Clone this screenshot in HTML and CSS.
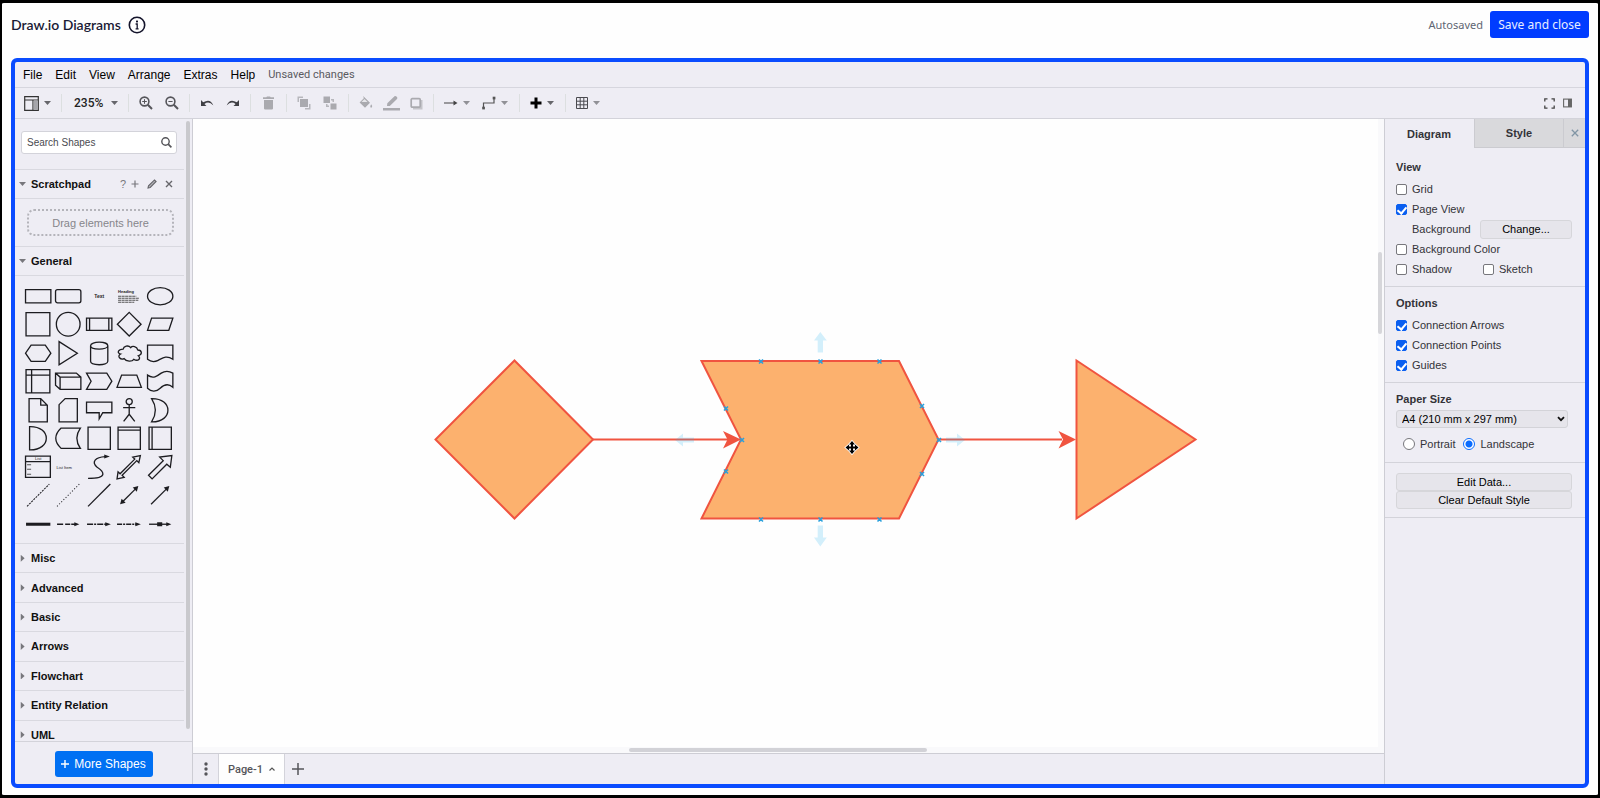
FILE: index.html
```html
<!DOCTYPE html>
<html lang="en">
<head>
<meta charset="utf-8">
<title>Draw.io Diagrams</title>
<link rel="stylesheet" href="styles.css">
</head>
<body>
<div class="page">
  <header class="top">
    <h1 class="title">Draw.io Diagrams</h1>
    <button class="plain" aria-label="Information"><svg width="18" height="18" viewBox="0 0 18 18"><circle cx="9" cy="9" r="7.7" fill="none" stroke="#14142b" stroke-width="1.6"/><rect x="8" y="4.6" width="2" height="1.800" fill="#14142b"/><path d="M7.600 8H9.200V13M7.600 12.800H10.600" fill="none" stroke="#14142b" stroke-width="1.300"/></svg></button>
    <span class="autosaved">Autosaved</span>
    <button class="save">Save and close</button>
  </header>

  <div class="editor">
    <nav class="menubar">
      <button class="menu">File</button><button class="menu">Edit</button><button class="menu">View</button><button class="menu">Arrange</button><button class="menu">Extras</button><button class="menu">Help</button>
      <span class="status">Unsaved changes</span>
    </nav>

    <div class="toolbar">
      <div class="tools tight">
        <button class="plain" aria-label="View"><svg width="15" height="15" viewBox="0 0 15 15"><path d="M.7 .7H14.3V14.3H.7ZM.7 4H14.3M9 4V14.3" fill="none" stroke="#333" stroke-width="1.2"/><rect x="9.5" y="4.5" width="4.3" height="9.3" fill="#a5a5aa"/></svg><i class="caret"></i></button>
      </div>
      <div class="tools">
        <button class="plain zoom">235%<i class="caret"></i></button>
      </div>
      <div class="tools">
        <button class="plain" aria-label="Zoom in"><svg width="14" height="14" viewBox="0 0 14 14" fill="none" stroke="#55555a"><circle cx="5.5" cy="5.5" r="4.4" stroke-width="1.6"/><path d="M8.8 8.8L13 13" stroke-width="2"/><path d="M3.2 5.5H7.8M5.5 3.2V7.8"/></svg></button>
        <button class="plain" aria-label="Zoom out"><svg width="14" height="14" viewBox="0 0 14 14" fill="none" stroke="#55555a"><circle cx="5.5" cy="5.5" r="4.4" stroke-width="1.6"/><path d="M8.8 8.8L13 13" stroke-width="2"/><path d="M3.4 5.5H7.6"/></svg></button>
      </div>
      <div class="tools">
        <button class="plain" aria-label="Undo"><svg width="14" height="14" viewBox="0 0 14 14"><path d="M1 4V10H6.5L4.4 8Q9 4.5 13.3 9.5Q10.5 2 3.2 6.3Z" fill="#3f3f44"/></svg></button>
        <button class="plain" aria-label="Redo"><svg width="14" height="14" viewBox="0 0 14 14"><path d="M13 4V10H7.5L9.6 8Q5 4.5 .7 9.5Q3.5 2 10.8 6.3Z" fill="#3f3f44"/></svg></button>
      </div>
      <div class="tools wide">
        <button class="plain" aria-label="Delete" disabled><svg width="13" height="14" viewBox="0 0 13 14" fill="#aaaaaf"><path d="M1 1.2H4.3L5 .4H8L8.7 1.2H12V3H1Z"/><path d="M2 4H11V12.5Q11 13.6 9.8 13.6H3.2Q2 13.6 2 12.5Z"/></svg></button>
      </div>
      <div class="tools">
        <button class="plain" aria-label="To front" disabled><svg width="14" height="14" viewBox="0 0 14 14"><path d="M.5 .5H6V2H2V6H.5ZM13.5 13.5H8V12H12V8H13.5Z" fill="#b7b7bc"/><rect x="3" y="3" width="8" height="8" fill="#aaaaaf"/></svg></button>
        <button class="plain" aria-label="To back" disabled><svg width="14" height="14" viewBox="0 0 14 14"><rect x=".5" y=".5" width="6.5" height="6.5" fill="#aaaaaf"/><rect x="7.5" y="7.5" width="6" height="6" fill="#aaaaaf"/><path d="M8 3H11V6H9.500V4.500H8ZM3 8H4.500V9.500H6V11H3Z" fill="#b7b7bc"/></svg></button>
      </div>
      <div class="tools close">
        <button class="plain" aria-label="Fill color" disabled><svg width="14" height="14" viewBox="0 0 14 14"><path d="M4.200 0L11 6.700L6 11.700L.6 6.500L4.800 2.300Z" fill="#aaaaaf"/><path d="M2.500 6L5.500 3L8.500 6Z" fill="#e6e6ea"/><path d="M12.200 8.300Q13.800 10.400 12.900 11.300Q12.100 12 11.400 11.200Q10.800 10.300 12.200 8.300" fill="#aaaaaf"/></svg></button>
        <button class="plain" aria-label="Line color" disabled><svg width="17" height="16" viewBox="0 0 17 16"><path d="M4 11L4.300 8.300L11.500 1.200Q12.500 .5 13.400 1.400L14 2Q14.800 3 14 3.900L6.800 11Z" fill="#aaaaaf"/><rect y="13" width="17" height="2.500" fill="#aaaaaf"/></svg></button>
        <button class="plain" aria-label="Shadow" disabled><svg width="13" height="13" viewBox="0 0 13 13"><path d="M3 12.500V10.500H10.500V3H12.500V12.500Z" fill="#c4c4c9"/><rect x="1.200" y="1.700" width="9" height="8.500" rx="1" fill="none" stroke="#aaaaaf" stroke-width="1.700"/></svg></button>
      </div>
      <div class="tools">
        <button class="plain" aria-label="Connection"><svg width="14" height="14" viewBox="0 0 14 14"><path d="M0 7H11" stroke="#444" stroke-width="1.200"/><path d="M9.500 4.500L13.500 7L9.500 9.500Z" fill="#444"/></svg><i class="caret faint"></i></button>
        <button class="plain" aria-label="Waypoints"><svg width="14" height="14" viewBox="0 0 14 14"><path d="M1.500 12V7H12V2" fill="none" stroke="#555" stroke-width="1.200"/><rect x=".2" y="10.700" width="2.700" height="2.700" fill="#555"/><rect x="10.700" y=".7" width="2.700" height="2.700" fill="#555"/></svg><i class="caret faint"></i></button>
      </div>
      <div class="tools">
        <button class="plain" aria-label="Insert"><svg width="12" height="12" viewBox="0 0 12 12"><path d="M6 .5V11.500M.5 6H11.500" stroke="#000" stroke-width="3"/></svg><i class="caret"></i></button>
      </div>
      <div class="tools">
        <button class="plain" aria-label="Table"><svg width="12" height="12" viewBox="0 0 12 12"><path d="M.5 .5H11.500V11.500H.5ZM4.200 .5V11.500M7.800 .5V11.500M.5 4.200H11.500M.5 7.800H11.500" fill="none" stroke="#4b4b50"/></svg><i class="caret faint"></i></button>
      </div>
      <div class="window-tools">
        <button class="plain" aria-label="Fullscreen"><svg width="11" height="11" viewBox="0 0 11 11"><path d="M3.500 .8H.8V3.500M7.500 .8H10.200V3.500M.8 7.500V10.200H3.500M10.200 7.500V10.200H7.500" fill="none" stroke="#444" stroke-width="1.300"/></svg></button>
        <button class="plain" aria-label="Format panel"><svg width="9" height="10" viewBox="0 0 9 10"><rect x=".6" y="1.100" width="7.800" height="7.800" fill="none" stroke="#666" stroke-width="1.100"/><rect x="5" y="1" width="3.500" height="8" fill="#666"/></svg></button>
      </div>
    </div>

    <div class="work">
      <aside class="sidebar">
        <div class="shapes">
          <div class="library">
            <div class="search"><input type="text" placeholder="Search Shapes" aria-label="Search Shapes"><svg width="11" height="11" viewBox="0 0 11 11" fill="none" stroke="#55555a"><circle cx="4.500" cy="4.500" r="3.700" stroke-width="1.400"/><path d="M7.200 7.200L10.400 10.400" stroke-width="1.700"/></svg></div>
            <div class="section"><button class="heading open">Scratchpad</button>
              <span class="pad-tools"><button class="plain" aria-label="Help">?</button><button class="plain" aria-label="Add"><svg width="8" height="8" viewBox="0 0 8 8"><path d="M4 .5V7.500M.5 4H7.500" stroke="#77777c" stroke-width="1.200"/></svg></button><button class="plain" aria-label="Edit"><svg width="10" height="10" viewBox="0 0 10 10"><path d="M1 9L1.500 6.800L7.500 .9L9.100 2.500L3.200 8.500Z" fill="#b0b0b5" stroke="#66666b" stroke-width="1.100"/></svg></button><button class="plain" aria-label="Close"><svg width="8" height="8" viewBox="0 0 8 8"><path d="M1 1L7 7M7 1L1 7" stroke="#66666b" stroke-width="1.400"/></svg></button></span>
            </div>
            <div class="pad"><div class="drop">Drag elements here</div></div>
            <div class="section"><button class="heading open">General</button></div>
            <div class="palette">
              <svg viewBox="0 0 30 28"><path d="M2.500 7.500H27.500V20.500H2.500Z"/></svg>
              <svg viewBox="0 0 30 28"><rect x="2.500" y="7.500" width="25" height="13" rx="2"/></svg>
              <svg viewBox="0 0 30 28"><text x="15" y="15.500" class="tiny bold">Text</text></svg>
              <svg viewBox="0 0 30 28"><text x="4" y="11" class="tiny bold left">Heading</text><path class="thin" d="M4 14H22M4 16H25M4 18H24M4 20H20" stroke-dasharray="3 .5"/></svg>
              <svg viewBox="0 0 30 28"><ellipse cx="15" cy="14" rx="12.500" ry="8.500"/></svg>

              <svg viewBox="0 0 30 28"><path d="M3 2.500H26.500V25.500H3Z"/></svg>
              <svg viewBox="0 0 30 28"><circle cx="15" cy="14" r="11.700"/></svg>
              <svg viewBox="0 0 30 28"><path d="M2.500 8H27.500V20H2.500ZM5.500 8V20M24.500 8V20"/></svg>
              <svg viewBox="0 0 30 28"><path d="M15 2.300L26.700 14L15 25.700L3.300 14Z"/></svg>
              <svg viewBox="0 0 30 28"><path d="M6.500 8H27.500L23.500 20H2.500Z"/></svg>

              <svg viewBox="0 0 30 28"><path d="M8 6H22L27.500 14L22 22H8L2.500 14Z"/></svg>
              <svg viewBox="0 0 30 28"><path d="M6 2.500L24 14L6 25.500Z"/></svg>
              <svg viewBox="0 0 30 28"><path d="M6.500 6.500V22C6.500 26.500 23.500 26.500 23.500 22V6.500C23.500 2 6.500 2 6.500 6.500C6.500 11 23.500 11 23.500 6.500"/></svg>
              <svg viewBox="0 0 30 28"><path d="M9 10C4 10 2.500 14 6.500 14.800C2.500 17 6.500 21 10 19.300C12 22.500 18 22.500 19.500 20C24 22.500 27 19 24 16.500C28.500 15 27.500 11 23.500 10.800C22.500 7 18 6.500 16.500 8.500C14 5.500 9.500 7 9 10Z"/></svg>
              <svg viewBox="0 0 30 28"><path d="M2.500 6H27.500V20C21 15.500 17 19 13 21C9 23 5 22 2.500 20Z"/></svg>

              <svg viewBox="0 0 30 28"><path d="M3 2.500H26.500V25.500H3ZM8.500 2.500V25.500M3 8H26.500"/></svg>
              <svg viewBox="0 0 30 28"><path d="M2.500 6H23L27.500 10V22H7L2.500 18ZM2.500 6L7 10V22M7 10H27.500"/></svg>
              <svg viewBox="0 0 30 28"><path d="M2.500 6H22.500L27.500 14L22.500 22H2.500L7 14Z"/></svg>
              <svg viewBox="0 0 30 28"><path d="M7.500 8H22.500L27 20H3Z"/></svg>
              <svg viewBox="0 0 30 28"><path d="M2.500 8C8 12 12 9 16 6C20 3.500 24 4 27.500 6V20C23 16 19 17 15 21C11 25 6 24.500 2.500 21Z"/></svg>

              <svg viewBox="0 0 30 28"><path d="M6 2.500H17.500L24 9V25.500H6ZM17.500 2.500V9H24"/></svg>
              <svg viewBox="0 0 30 28"><path d="M12 2.500H24V25.500H6V8.500Z"/></svg>
              <svg viewBox="0 0 30 28"><path d="M2.500 6H27.500V16.500H18.500L15 22.500V16.500H2.500Z"/></svg>
              <svg viewBox="0 0 30 28"><circle cx="15" cy="5.500" r="3"/><path d="M15 8.500V18M9 11.500H21M15 18L9.500 25M15 18L20.500 25"/></svg>
              <svg viewBox="0 0 30 28"><path d="M6.500 2.500C28 2 28 26 6.500 25.500Q14 14 6.500 2.500Z"/></svg>

              <svg viewBox="0 0 30 28"><path d="M6.500 2.500C28.500 2 28.500 26 6.500 25.500Z"/></svg>
              <svg viewBox="0 0 30 28"><path d="M8 4H27Q20 14 27 24H8Q-2.500 14 8 4Z"/></svg>
              <svg viewBox="0 0 30 28"><path d="M4 3H26V25H4Z"/></svg>
              <svg viewBox="0 0 30 28"><path d="M4 3H26V25H4ZM4 6H26"/></svg>
              <svg viewBox="0 0 30 28"><path d="M4 3H26V25H4ZM7 3V25"/></svg>

              <svg viewBox="0 0 30 28"><path d="M2.500 3H27V24H2.500ZM2.500 8.500H27"/><text x="15" y="7" class="tiny">List</text><path class="thin" d="M4 11.500H8M4 16H8M4 21H8"/></svg>
              <svg viewBox="0 0 30 28"><text x="11" y="15.500" class="tiny">List Item</text></svg>
              <svg viewBox="0 0 30 28"><path d="M4 25C25 25 19 18 13 14C7 9 11 4 21 3.500"/><path class="solid" d="M20 1.500L25.500 3.500L20 5.500Z"/></svg>
              <svg viewBox="0 0 30 28"><path d="M3 25.500L4 18.500L6 20.500L20.500 6L18.500 4L26 2.500L24.500 9.500L22.500 7.500L8 22L10 24Z"/></svg>
              <svg viewBox="0 0 30 28"><path d="M3.500 22L18 7.500L14.500 4L26.500 2.500L25 14L21.500 11L7 25.500Z"/></svg>

              <svg viewBox="0 0 30 28"><path d="M4 25L26 3" class="fine" stroke-dasharray="2 1"/></svg>
              <svg viewBox="0 0 30 28"><path d="M4 25L26 3" class="fine" stroke-dasharray="1 2"/></svg>
              <svg viewBox="0 0 30 28"><path d="M4 25L26 3"/></svg>
              <svg viewBox="0 0 30 28"><path d="M8 21L22 7"/><path class="solid" d="M6 23L7.500 17.500L11.500 21.500ZM24 5L22.500 10.500L18.500 6.500Z"/></svg>
              <svg viewBox="0 0 30 28"><path d="M6 23L22 7"/><path class="solid" d="M24 5L22.500 10.500L18.500 6.500Z"/></svg>

              <svg viewBox="0 0 30 28"><path d="M3 14H27" class="thick"/></svg>
              <svg viewBox="0 0 30 28"><path d="M4 14H23" stroke-dasharray="6 2 5 1"/><path class="solid" d="M21 12L26 14L21 16Z"/></svg>
              <svg viewBox="0 0 30 28"><path d="M3 14H23" stroke-dasharray="6 1 2 1"/><path class="solid" d="M21 12L26.500 14L21 16Z"/></svg>
              <svg viewBox="0 0 30 28"><path d="M3 14H23" stroke-dasharray="5 1 2 1"/><path class="solid" d="M21 12L26.500 14L21 16Z"/></svg>
              <svg viewBox="0 0 30 28"><path d="M4 14H23"/><path class="solid" d="M12 12H17V16H12ZM21 12L26 14L21 16Z"/></svg>
            </div>
            <div class="closed-list">
              <div class="section"><button class="heading">Misc</button></div>
              <div class="section"><button class="heading">Advanced</button></div>
              <div class="section"><button class="heading">Basic</button></div>
              <div class="section"><button class="heading">Arrows</button></div>
              <div class="section"><button class="heading">Flowchart</button></div>
              <div class="section"><button class="heading">Entity Relation</button></div>
              <div class="section"><button class="heading">UML</button></div>
            </div>
          </div>
          <div class="side-scroll"></div>
        </div>
        <div class="more-bar"><button class="more"><svg width="8" height="8" viewBox="0 0 8 8"><path d="M4 0V8M0 4H8" stroke="#fff" stroke-width="1.400"/></svg>More Shapes</button></div>
      </aside>

      <main class="center">
        <div class="canvas">
          <svg class="diagram" viewBox="193 119 1185 628">
            <g fill="#fcb16e" stroke="#f05440" stroke-width="2">
              <path d="M514.500 360.500L593 439.500L514.500 518.500L435.500 439.500Z"/>
              <path d="M593 439.500H730M939 439.500H1062" fill="none"/>
              <path d="M701.500 361H899L938.500 439.500L899 518.500H701.500L741 439.500Z"/>
              <path d="M1076.500 360.500L1195.500 439.500L1076.500 518.500Z"/>
            </g>
            <path d="M741 439.500L723 431L727.500 439.500L723 448.500ZM1076 439.500L1058.500 431L1063 439.500L1058.500 448.500Z" fill="#f05440"/>
            <g fill="#29b6f2" fill-opacity=".2">
              <path d="M820.300 332L826.800 340.500H823V352.500H817.700V340.500H814Z"/>
              <path d="M820.300 546.500L826.800 537.500H823V525.500H817.700V537.500H814Z"/>
              <path d="M675 440L683 433.500V437.500H694V442.500H683V446.500Z"/>
              <path d="M965 440L957 433.500V437.500H946V442.500H957V446.500Z"/>
            </g>
            <path d="M759 359.500l4 4m0-4l-4 4M818.500 359.500l4 4m0-4l-4 4M877.500 359.500l4 4m0-4l-4 4M759 517.500l4 4m0-4l-4 4M818.500 517.500l4 4m0-4l-4 4M877.500 517.500l4 4m0-4l-4 4M724 406.500l4 4m0-4l-4 4M740 438l4 4m0-4l-4 4M724 469.500l4 4m0-4l-4 4M920 404l4 4m0-4l-4 4M937 438l4 4m0-4l-4 4M920 472l4 4m0-4l-4 4" stroke="#29a0dc" stroke-width="1.600"/>
            <g transform="translate(852 447.500)"><path d="M0 -6.500L3 -3H1V-1H3V-3L6.500 0L3 3V1H1V3H3L0 6.500L-3 3H-1V1H-3V3L-6.500 0L-3 -3V-1H-1V-3H-3Z" fill="#000" stroke="#fff" stroke-width="1.600" paint-order="stroke"/></g>
          </svg>
          <div class="track-y"><div class="thumb-y"></div></div>
          <div class="track-x"><div class="thumb-x"></div></div>
        </div>
        <footer class="pages">
          <button class="page-menu" aria-label="Pages"><svg width="4" height="14" viewBox="0 0 4 14" fill="#55555a"><circle cx="2" cy="2" r="1.700"/><circle cx="2" cy="7" r="1.700"/><circle cx="2" cy="12" r="1.700"/></svg></button>
          <button class="page-tab">Page-1<svg width="6" height="4" viewBox="0 0 6 4"><path d="M.5 3.500L3 1L5.500 3.500" fill="none" stroke="#555" stroke-width="1.200"/></svg></button>
          <button class="page-add" aria-label="Insert page"><svg width="12" height="12" viewBox="0 0 12 12"><path d="M6 0V12M0 6H12" stroke="#55555a" stroke-width="1.500"/></svg></button>
        </footer>
      </main>

      <aside class="format">
        <div class="tabs"><button class="tab active">Diagram</button><button class="tab">Style</button><button class="tab shut" aria-label="Close"><svg width="8" height="8" viewBox="0 0 8 8"><path d="M.8 .8L7.200 7.200M7.200 .8L.8 7.200" stroke="#8195a5" stroke-width="1.300"/></svg></button></div>
        <section class="block">
          <h2>View</h2>
          <div class="row"><label><input type="checkbox">Grid</label></div>
          <div class="row"><label><input type="checkbox" checked>Page View</label></div>
          <div class="row inset"><span>Background</span><button class="btn change">Change...</button></div>
          <div class="row"><label><input type="checkbox">Background Color</label></div>
          <div class="row half"><label><input type="checkbox">Shadow</label><label><input type="checkbox">Sketch</label></div>
        </section>
        <section class="block options">
          <h2>Options</h2>
          <div class="row"><label><input type="checkbox" checked>Connection Arrows</label></div>
          <div class="row"><label><input type="checkbox" checked>Connection Points</label></div>
          <div class="row"><label><input type="checkbox" checked>Guides</label></div>
        </section>
        <section class="block paper">
          <h2><label for="paper">Paper Size</label></h2>
          <div class="select-wrap"><select id="paper"><option>A4 (210 mm x 297 mm)</option></select><svg width="8" height="6" viewBox="0 0 8 6"><path d="M1 1.200L4 4.200L7 1.200" fill="none" stroke="#111" stroke-width="1.800"/></svg></div>
          <div class="radios"><label><input type="radio" name="o">Portrait</label><label><input type="radio" name="o" checked>Landscape</label></div>
        </section>
        <section class="block actions">
          <button class="btn">Edit Data...</button>
          <button class="btn">Clear Default Style</button>
        </section>
      </aside>
    </div>
  </div>
</div>
</body>
</html>
```
FILE: styles.css
```css
* { box-sizing: border-box; }
body { margin: 0; background: #000; font-family: "Liberation Sans", Arial, sans-serif; font-size: 11px; color: #333338; }
button, input, select { font: inherit; color: inherit; margin: 0; }
button { border: 0; background: none; padding: 0; cursor: pointer; white-space: nowrap; }
svg { display: block; flex: none; }
h1, h2 { margin: 0; }

.page { height: 100vh; border: solid #000; border-width: 3px 2px; background: #fefefe; padding: 0 9px 7px; display: flex; flex-direction: column; border-radius: 4px; }
.plain { display: flex; align-items: center; gap: 5px; }

.top { height: 55px; padding-bottom: 12px; display: flex; align-items: center; flex: none; }
.title { font: 600 14px Lato, sans-serif; color: #1a1a35; margin-right: 7px; }
.autosaved { margin-left: auto; font: 11px "Noto Sans", sans-serif; color: #5f6673; }
.save { margin-left: 7px; height: 27px; width: 99px; border-radius: 3px; background: #003cff; color: #e8eeff; font: 12px "Noto Sans", sans-serif; }

.editor { flex: 1; min-height: 0; border: 4px solid #0a4cff; border-radius: 6px; background: #eeedf4; display: flex; flex-direction: column; overflow: hidden; }
.menubar { height: 26px; flex: none; display: flex; align-items: center; padding: 0 8px; gap: 13px; border-bottom: 1px solid #d6d6de; }
.menu { font-size: 12px; color: #000; }
.status { font: 11px Roboto, sans-serif; color: #5a5a60; }

.toolbar { height: 31px; flex: none; display: flex; align-items: center; border-bottom: 1px solid #d3d3da; }
.tools { display: flex; align-items: center; gap: 12px; padding: 0 10px; height: 18px; border-right: 1px solid #dcdfe0; }
.tools:nth-child(n+5) { padding-right: 11px; }
.tools.tight { padding-left: 9px; }
.tools.wide { padding-left: 11px; }
.tools.close { gap: 10px; padding-right: 10px; }
.tools:nth-last-child(2) { border-right: 0; }
.caret { width: 7px; height: 4px; background: #66666b; clip-path: polygon(0 0, 100% 0, 50% 100%); }
.faint { background: #919196; }
.zoom { font: 500 12px Roboto, sans-serif; color: #222; width: 46px; justify-content: space-between; padding-left: 2px; }
.window-tools { margin-left: auto; display: flex; align-items: center; gap: 8px; padding-right: 13px; }

.work { flex: 1; min-height: 0; display: flex; }

.sidebar { width: 178px; flex: none; border-right: 1px solid #cdcdd4; display: flex; flex-direction: column; }
.shapes { flex: 1; min-height: 0; display: flex; overflow: hidden; }
.library { flex: 1; min-width: 0; }
.side-scroll { width: 4px; margin: 2px 2px 12px 2px; background: #c9c9cd; border-radius: 2px; }
.search { margin: 12px 7px 15px 6px; height: 23px; display: flex; align-items: center; background: #fff; border: 1px solid #d3d3da; border-radius: 3px; padding: 0 4px 0 5px; }
.search input { flex: 1; min-width: 0; border: 0; padding: 0; background: none; outline: 0; font-size: 10px; }
.search input::placeholder { color: #4a4a50; opacity: 1; }
.section { height: 29px; display: flex; align-items: center; border-top: 1px solid #d9d9e0; padding-left: 4px; }
.closed-list { height: 206px; display: grid; grid-template-rows: repeat(7, 1fr); }
.closed-list .section { height: auto; }
.heading { display: flex; align-items: center; font-weight: 700; color: #111; }
.heading::before { content: ""; width: 7px; height: 7px; margin-right: 5px; background: #77777c; clip-path: polygon(25% 0, 80% 50%, 25% 100%); }
.heading.open::before { clip-path: polygon(0 20%, 100% 20%, 50% 80%); }
.pad-tools { margin-left: auto; display: flex; align-items: center; gap: 5px; padding-right: 11px; color: #77777c; }
.pad-tools .plain:nth-child(n+3) { margin-left: 3px; }
.pad { height: 48px; border-top: 1px solid #d9d9e0; padding: 10px 10px 9px 12px; }
.drop { height: 27px; display: flex; align-items: center; justify-content: center; border: 2px dotted #b4b4ba; border-radius: 7px; color: #86868b; }
.palette { height: 268px; border-top: 1px solid #d9d9e0; padding: 6px 9px 5px 8px; display: grid; grid-template-columns: repeat(5, 1fr); grid-template-rows: repeat(9, 1fr); }
.palette svg { width: 100%; height: 100%; fill: none; stroke: #1c1c20; stroke-width: 1.3; }
.palette text { stroke: none; fill: #222; }
.tiny { font-size: 4px; text-anchor: middle; }
.bold { font-weight: 700; font-size: 5px; }
.left { text-anchor: start; font-size: 4px; }
.palette .thin { stroke: #555; stroke-width: 1; }
.palette .fine { stroke-width: 1; }
.palette .thick { stroke-width: 3; }
.palette .solid { fill: #1c1c20; stroke: none; }
.more-bar { height: 43px; flex: none; border-top: 1px solid #d3d3da; display: flex; align-items: flex-start; justify-content: center; padding-top: 9px; }
.more { height: 26px; width: 98px; border-radius: 3px; background: #0070f3; color: #fff; display: flex; align-items: center; justify-content: center; gap: 5px; font-size: 12px; }

.center { flex: 1; min-width: 0; display: flex; flex-direction: column; }
.canvas { flex: 1; min-height: 0; background: #fefefe; display: grid; grid-template: minmax(0, 1fr) 6px / minmax(0, 1fr) 6px; }
.diagram { width: 100%; height: 100%; }
.track-y { background: #f9f9fb; padding-top: 133px; }
.thumb-y { width: 4px; height: 82px; border-radius: 2px; background: #d6d6da; }
.track-x { background: #f9f9fb; grid-column: 1 / 3; padding-left: 436px; padding-top: 1px; }
.thumb-x { width: 298px; height: 4px; border-radius: 2px; background: #d2d2d7; }
.pages { height: 31px; flex: none; display: flex; border-top: 1px solid #cdcdd4; }
.page-menu { width: 26px; display: flex; align-items: center; justify-content: center; border-right: 1px solid #d3d3da; }
.page-tab { width: 66px; background: #fefefe; border-right: 1px solid #d3d3da; display: flex; align-items: center; justify-content: center; gap: 6px; font: 500 11px Roboto, sans-serif; color: #55555a; }
.page-add { padding: 0 7px; }

.format { width: 201px; flex: none; border-left: 1px solid #cdcdd4; }
.tabs { height: 29px; display: flex; }
.tab { flex: 1; font-weight: 700; background: #d9d9dc; border-left: 1px solid #cbcbd0; border-bottom: 1px solid #cbcbd0; }
.active { background: none; border: 0; padding-right: 1px; }
.shut { flex: 0 0 22px; display: flex; align-items: center; justify-content: center; }
.block { padding: 10px 13px 7px 11px; border-bottom: 1px solid #d3d3da; }
.block h2 { font-size: 11px; line-height: 18px; margin-bottom: 3px; }
.row { height: 20px; display: flex; align-items: center; }
.row label, .radios label { display: flex; align-items: center; gap: 5px; }
.inset { padding-left: 16px; justify-content: space-between; }
.half label { width: 87px; }
.block input { appearance: none; width: 11px; height: 11px; border: 1px solid #77777c; border-radius: 2px; background: #fff; flex: none; }
.block input[type="checkbox"]:checked { border-color: #0a5ff0; background: #0a5ff0; display: grid; place-items: start center; }
.block input[type="checkbox"]:checked::after { content: ""; width: 4px; height: 7px; border: solid #fff; border-width: 0 2px 2px 0; transform: rotate(40deg); }
.block input[type="radio"] { border-radius: 50%; width: 12px; height: 12px; }
.block input[type="radio"]:checked { border: 1px solid #0a6cff; background: radial-gradient(circle, #0a6cff 0 3px, #fff 4px); }
.btn { height: 18px; border: 1px solid #d6d6da; border-radius: 3px; background: #e6e5eb; color: #000; }
.change { width: 92px; height: 19px; }
.options { padding-top: 7px; }
.paper { padding-top: 7px; padding-bottom: 12px; }
.paper h2 { margin-bottom: 2px; }
.select-wrap { display: grid; align-items: center; margin-right: 4px; }
.select-wrap > * { grid-area: 1 / 1; }
.select-wrap svg { justify-self: end; margin-right: 3px; pointer-events: none; }
select { appearance: none; width: 100%; height: 18px; border: 1px solid #d3d3d8; border-radius: 3px; background: #e6e5eb; color: #000; padding: 0 5px; }
.radios { display: flex; gap: 8px; padding: 10px 0 0 7px; }
.actions { display: flex; flex-direction: column; padding-top: 10px; padding-bottom: 8px; }
```
